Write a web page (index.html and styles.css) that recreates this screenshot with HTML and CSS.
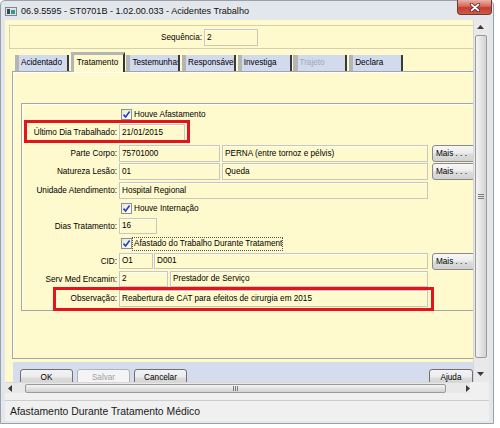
FILE: index.html
```html
<!DOCTYPE html>
<html lang="pt">
<head>
<meta charset="utf-8">
<title>Acidentes Trabalho</title>
<link rel="stylesheet" href="styles.css">
</head>
<body>
<div class="window">
  <div class="titlebar">
    <svg class="app-icon" width="12" height="9" viewBox="0 0 12 9">
      <rect x="0.5" y="0.5" width="11" height="8" fill="#dfe3e8" stroke="#7d8792"/>
      <rect x="2" y="2" width="3" height="5" fill="#3b4651"/>
      <rect x="6" y="3" width="4" height="4" fill="#2f9c8f"/>
    </svg>
    <span class="title">06.9.5595 - ST0701B - 1.02.00.033 - Acidentes Trabalho</span>
    <div class="close-btn">
      <svg width="12" height="9" viewBox="0 0 12 9">
        <path d="M2.5 1.5 L9.5 7.5 M9.5 1.5 L2.5 7.5" stroke="#4a1c18" stroke-width="3.2" stroke-linecap="round"/>
        <path d="M2.5 1.5 L9.5 7.5 M9.5 1.5 L2.5 7.5" stroke="#ffffff" stroke-width="1.7" stroke-linecap="round"/>
      </svg>
    </div>
  </div>
  <div class="client">
    <div class="main-area">
      <div class="viewport">
        <div class="seq-panel">
          <span class="seq-label">Sequência:</span>
          <span class="field seq-field">2</span>
        </div>
        <div class="tabs">
          <div class="tab">Acidentado</div>
          <div class="tab active">Tratamento</div>
          <div class="tab">Testemunhas</div>
          <div class="tab">Responsável</div>
          <div class="tab">Investiga</div>
          <div class="tab disabled">Trajeto</div>
          <div class="tab">Declara</div>
        </div>
        <div class="tab-panel">
          <div class="group">
            <span></span>
            <div class="ctrl check"><span class="checkbox"><svg width="9" height="9" viewBox="0 0 9 9"><path d="M1.5 4.6 L3.6 7 L7.6 1.6" fill="none" stroke="#23469c" stroke-width="1.6"/></svg></span><span class="check-text">Houve Afastamento</span></div>

            <span class="lbl">Último Dia Trabalhado:</span>
            <div class="ctrl"><span class="field w-date">21/01/2015</span></div>

            <span class="lbl">Parte Corpo:</span>
            <div class="ctrl"><span class="field w-code">75701000</span><span class="field w-desc">PERNA (entre tornoz e pélvis)</span><span class="more-btn">Mais . . .</span></div>

            <span class="lbl">Natureza Lesão:</span>
            <div class="ctrl"><span class="field w-code">01</span><span class="field w-desc">Queda</span><span class="more-btn">Mais . . .</span></div>

            <span class="lbl">Unidade Atendimento:</span>
            <div class="ctrl"><span class="field w-full">Hospital Regional</span></div>

            <span></span>
            <div class="ctrl check"><span class="checkbox"><svg width="9" height="9" viewBox="0 0 9 9"><path d="M1.5 4.6 L3.6 7 L7.6 1.6" fill="none" stroke="#23469c" stroke-width="1.6"/></svg></span><span class="check-text">Houve Internação</span></div>

            <span class="lbl">Dias Tratamento:</span>
            <div class="ctrl"><span class="field w-days short">16</span></div>

            <span></span>
            <div class="ctrl check"><span class="checkbox"><svg width="9" height="9" viewBox="0 0 9 9"><path d="M1.5 4.6 L3.6 7 L7.6 1.6" fill="none" stroke="#23469c" stroke-width="1.6"/></svg></span><span class="focus-text">Afastado do Trabalho Durante Tratamento</span></div>

            <span class="lbl">CID:</span>
            <div class="ctrl"><span class="field w-cid short">O1</span><span class="field w-cid-desc short">D001</span><span class="more-btn">Mais . . .</span></div>

            <span class="lbl">Serv Med Encamin:</span>
            <div class="ctrl"><span class="field w-serv short">2</span><span class="field w-serv-desc short">Prestador de Serviço</span></div>

            <span class="lbl">Observação:</span>
            <div class="ctrl"><span class="field w-full">Reabertura de CAT para efeitos de cirurgia em 2015</span></div>

            <div class="red-mark mark-1"></div>
            <div class="red-mark mark-2"></div>
          </div>
        </div>
        <div class="button-bar">
          <span class="btn">OK</span>
          <span class="btn disabled">Salvar</span>
          <span class="btn">Cancelar</span>
          <span class="btn help">Ajuda</span>
        </div>
      </div>
      <div class="vscroll">
        <svg class="arrow-up" width="7" height="4" viewBox="0 0 7 4"><path d="M0 4 L3.5 0 L7 4 Z" fill="#3a3a3a"/></svg>
        <div class="vthumb">
          <svg width="6" height="5" viewBox="0 0 6 5"><path d="M0 0.5 H6 M0 2.5 H6 M0 4.5 H6" stroke="#7c7c7c" stroke-width="1"/></svg>
        </div>
        <svg class="arrow-down" width="7" height="4" viewBox="0 0 7 4"><path d="M0 0 L3.5 4 L7 0 Z" fill="#3a3a3a"/></svg>
      </div>
    </div>
    <div class="hscroll-row">
      <div class="hscroll">
        <svg class="arrow-left" width="4" height="7" viewBox="0 0 4 7"><path d="M4 0 L0 3.5 L4 7 Z" fill="#3a3a3a"/></svg>
        <div class="hthumb">
          <svg width="5" height="5" viewBox="0 0 5 5"><path d="M0.5 0 V5 M2.5 0 V5 M4.5 0 V5" stroke="#7c7c7c" stroke-width="1"/></svg>
        </div>
        <svg class="arrow-right" width="4" height="7" viewBox="0 0 4 7"><path d="M0 0 L4 3.5 L0 7 Z" fill="#3a3a3a"/></svg>
      </div>
      <div class="corner"></div>
    </div>
    <div class="status-gap"></div>
    <div class="statusbar">Afastamento Durante Tratamento Médico</div>
  </div>
</div>
</body>
</html>
```

FILE: styles.css
```css
* { box-sizing: border-box; }
html, body { margin: 0; padding: 0; }
body {
  background: #ffffff;
  font-family: "Liberation Sans", Arial, sans-serif;
  font-size: 8.2px;
  color: #000;
}

.window {
  width: 494px;
  height: 424px;
  display: flex;
  flex-direction: column;
  background: #e3e7ec;
  border: 1px solid #98a1ab;
  border-radius: 5px 5px 0 0;
  padding: 0 4px 2px 4px;
}

/* title bar */
.titlebar {
  height: 19px;
  flex: none;
  display: flex;
  align-items: center;
}
.app-icon { flex: none; margin-right: 4px; margin-top: 2px; }
.title { font-size: 9.1px; color: #111; white-space: nowrap; }
.close-btn {
  margin-left: auto;
  margin-right: -3px;
  margin-top: -1px;
  align-self: flex-start;
  width: 35px;
  height: 15px;
  border: 1px solid #6e3a36;
  border-top: none;
  border-radius: 0 0 4px 4px;
  background: linear-gradient(#eab1a8, #d6685c 45%, #c33d2e 55%, #d05b49);
  display: flex;
  align-items: center;
  justify-content: center;
}

/* client */
.client {
  flex: 1;
  display: flex;
  flex-direction: column;
  background: #f0f0f0;
}
.main-area { height: 362px; flex: none; display: flex; }
.viewport {
  flex: 1;
  background: #fffacd;
  overflow: hidden;
  display: flex;
  flex-direction: column;
  align-items: flex-start;
}
.viewport > * { flex: none; }

/* sequencia panel */
.seq-panel {
  margin: 5px 0 0 4px;
  width: 470px;
  height: 24px;
  border: 1px solid #d5d0ad;
  border-right: none;
  display: flex;
  align-items: center;
}
.seq-label { width: 192px; text-align: right; margin-right: 2px; }
.seq-field { width: 54px; height: 16px; }

/* tabs */
.tabs {
  margin-top: 3px;
  height: 19px;
  display: flex;
  align-items: flex-end;
  padding-left: 10px;
  gap: 1.7px;
  position: relative;
  z-index: 1;
}
.tab {
  flex: none;
  width: 54px;
  height: 16px;
  background: #d2daee;
  border-left: 4px solid #b5b5b5;
  border-right: 2px solid #3a3a3a;
  padding-left: 2px;
  line-height: 16px;
  white-space: nowrap;
  overflow: hidden;
}
.tab.active {
  height: 20px;
  margin-bottom: -1px;
  background: #fffacd;
  border-top: 3px solid #b5b5b5;
  border-left: 3px solid #b5b5b5;
  border-right: 2px solid #333;
  padding-left: 3px;
}
.tab.disabled { color: #a3a6b6; border-left-width: 5px; padding-left: 1px; }

/* tab panel */
.tab-panel {
  margin-left: 7px;
  width: 470px;
  height: 288px;
  border: 1px solid #a5a5a5;
  border-right: none;
  box-shadow: inset 1px 1px 0 #ffffff;
}
.group {
  position: relative;
  margin: 31px 0 0 8px;
  width: 470px;
  height: 208px;
  border: 1px solid #a5a5a5;
  border-right: none;
  box-shadow: inset 1px 1px 0 #ffffff;
  padding: 3px 0 2px 0;
  display: grid;
  grid-template-columns: 95px 1fr;
  grid-template-rows: 14px 23px 18px 19px 18px 18px 18px 17px 18px 18px 20px;
  column-gap: 2px;
  align-items: center;
}
.lbl { text-align: right; white-space: nowrap; }
.ctrl { display: flex; align-items: center; }
.field {
  display: block;
  flex: none;
  height: 17px;
  line-height: 15px;
  padding: 0 2px;
  border: 1px solid #c9c7b9;
  box-shadow: inset 1px 1px 0 #fffef4;
  background: #fffacd;
  white-space: nowrap;
  overflow: hidden;
}
.field.short { height: 16px; line-height: 14px; }
.w-date { width: 66px; }
.w-code { width: 101px; }
.w-desc { width: 206px; margin-left: 2px; }
.w-full { width: 309px; }
.w-days { width: 38px; }
.w-cid { width: 34px; }
.w-cid-desc { width: 274px; margin-left: 1px; }
.w-serv { width: 49px; }
.w-serv-desc { width: 258px; margin-left: 2px; }

.more-btn {
  flex: none;
  width: 44px;
  height: 17px;
  margin-left: 4px;
  border: 1px solid #8a8a8a;
  border-radius: 3px;
  background: linear-gradient(#f7f7f7, #ececec 48%, #dcdcdc 52%, #d2d2d2);
  padding-left: 3px;
  line-height: 15px;
  white-space: nowrap;
}

.check { padding-left: 2px; }
.checkbox {
  flex: none;
  width: 11px;
  height: 11px;
  border: 1px solid #8e8f8f;
  background: linear-gradient(135deg, #e6e6e6, #ffffff);
  display: flex;
  align-items: center;
  justify-content: center;
}
.check-text { margin-left: 2px; white-space: nowrap; }
.focus-text {
  width: 151px;
  height: 14px;
  border: 1px dotted #555;
  padding-left: 1px;
  line-height: 12px;
  white-space: nowrap;
  overflow: hidden;
}

/* red annotation boxes */
.red-mark {
  position: absolute;
  border: 3px solid #e5131c;
}
.mark-1 { left: 2px; top: 16px; width: 166px; height: 23px; }
.mark-2 { left: 31px; top: 183px; width: 381px; height: 24px; }

/* button bar */
.button-bar {
  margin: 3px 0 0 8px;
  width: 460px;
  height: 30px;
  background: #d4dcee;
  display: flex;
  gap: 4px;
  padding: 7px 0 0 7px;
}
.btn {
  flex: none;
  width: 53px;
  height: 17px;
  border: 1px solid #707070;
  border-radius: 3px;
  background: linear-gradient(#f3f3f3, #ebebeb 48%, #dddddd 52%, #cfcfcf);
  text-align: center;
  line-height: 15px;
}
.btn.disabled { border-color: #adb2b5; color: #a0a0a0; background: #f4f4f4; }
.btn.help { margin-left: auto; width: 44px; }

/* vertical scrollbar */
.vscroll {
  width: 16px;
  flex: none;
  background: #e9e9e9;
  border-left: 1px solid #d6d6d6;
  display: flex;
  flex-direction: column;
  align-items: center;
}
.arrow-up { margin-top: 5px; margin-bottom: 6px; margin-right: 3px; }
.vthumb {
  width: 12px;
  height: 323px;
  margin-right: 2px;
  border: 1px solid #9a9a9a;
  border-radius: 2px;
  background: linear-gradient(90deg, #f4f4f4, #e4e4e4 50%, #d4d4d4);
  display: flex;
  align-items: center;
  justify-content: center;
}
.arrow-down { margin-top: 14px; margin-right: 3px; }

/* horizontal scrollbar */
.hscroll-row { height: 11px; flex: none; display: flex; }
.hscroll {
  width: 465px;
  background: #e8e8e8;
  border-top: 1px solid #d8d8d8;
  display: flex;
  align-items: center;
}
.arrow-left { margin-left: 3px; }
.hthumb {
  margin-left: 13px;
  width: 422px;
  height: 9px;
  border: 1px solid #9a9a9a;
  border-radius: 2px;
  background: linear-gradient(#f4f4f4, #e2e2e2 50%, #d2d2d2);
  display: flex;
  align-items: center;
  justify-content: center;
}
.arrow-right { margin-left: 20px; }
.corner { flex: 1; background: #f0f0f0; }

.status-gap { height: 7px; flex: none; }
.statusbar {
  flex: 1;
  border-top: 1px solid #cdcdcd;
  background: #f0f0f0;
  padding-left: 5px;
  display: flex;
  align-items: center;
  font-size: 10.4px;
  color: #1a1a1a;
}
```
